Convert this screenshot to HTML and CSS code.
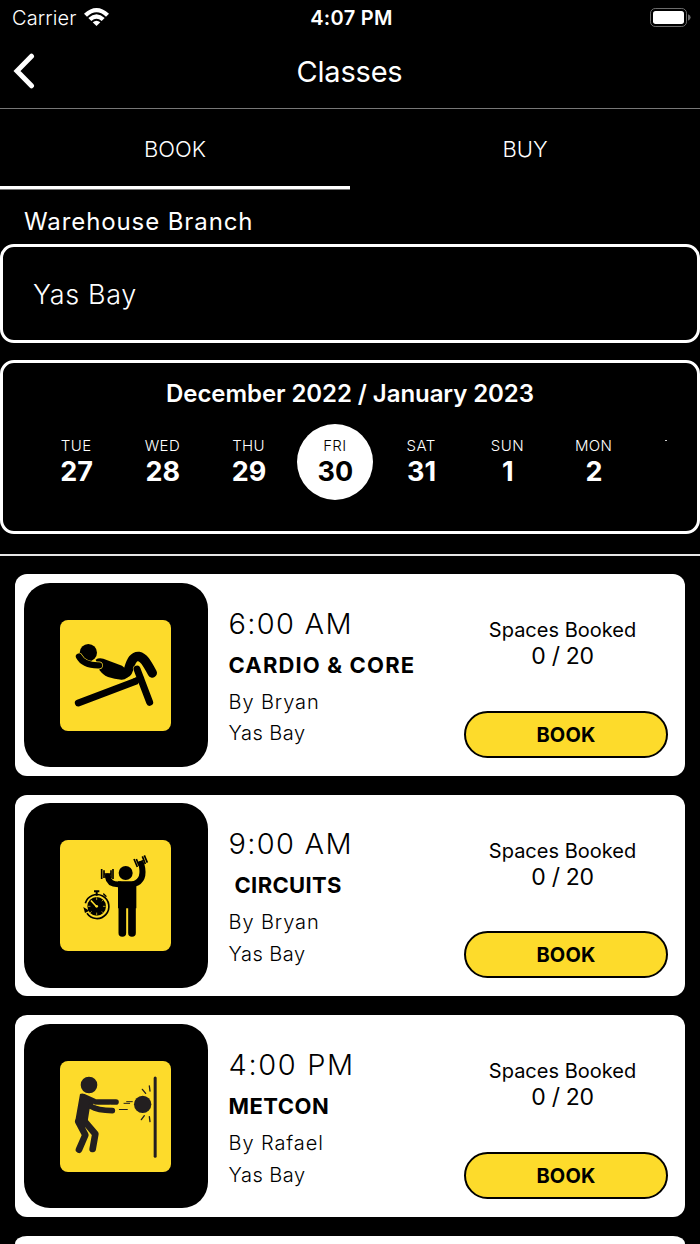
FILE: index.html
```html
<!DOCTYPE html>
<html lang="en">
<head>
    <meta charset="UTF-8">
    <meta name="viewport" content="width=device-width, initial-scale=1.0">
    <title>Classes</title>
    <link rel="stylesheet" href="styles.css">
</head>
<body>
    <div class="status-bar">
        <div class="carrier">
            <span>Carrier</span>
            <svg class="wifi" viewBox="0 0 75 54">
                <path d="M0 17 Q37.5 -17 75 17 L66 26 Q37.5 0 9 26 Z"/>
                <path d="M13 30 Q37.5 8 62 30 L53 39 Q37.5 25 22 39 Z"/>
                <path d="M26 43 Q37.5 33 49 43 L37.5 54 Z"/>
            </svg>
        </div>
        <span class="clock">4:07 PM</span>
        <div class="battery-wrap">
            <svg class="battery" viewBox="0 0 123 57">
                <rect x="1.5" y="1.5" width="108" height="54" rx="14" fill="none" stroke="#6c6c6c" stroke-width="3"/>
                <rect x="9" y="9" width="93" height="39" rx="8" fill="#fff"/>
                <path d="M114 19 Q122 22 122 28.5 Q122 35 114 38 Z" fill="#6c6c6c"/>
            </svg>
        </div>
    </div>

    <header class="header">
        <svg class="back" viewBox="0 0 22 36">
            <path d="M18.5 3.2 L4 18 L18.5 32.8"/>
        </svg>
        <h1>Classes</h1>
    </header>

    <nav class="tabs">
        <div class="tab active">BOOK</div>
        <div class="tab">BUY</div>
    </nav>

    <main>
        <h2 class="branch-label">Warehouse Branch</h2>
        <div class="branch-field">Yas Bay</div>

        <section class="calendar">
            <h3>December 2022 / January 2023</h3>
            <div class="days">
                <div class="day"><span>TUE</span><b>27</b></div>
                <div class="day"><span>WED</span><b>28</b></div>
                <div class="day"><span>THU</span><b>29</b></div>
                <div class="day selected"><span>FRI</span><b>30</b></div>
                <div class="day"><span>SAT</span><b>31</b></div>
                <div class="day"><span>SUN</span><b>1</b></div>
                <div class="day"><span>MON</span><b>2</b></div>
                <div class="day-peek"></div>
            </div>
        </section>

        <section class="class-list">
            <article class="card">
                <div class="thumb">
                    <svg class="icon" viewBox="30 29 333 333">
                        <circle cx="115" cy="127" r="26"/>
                        <path d="M222 190 Q232 190 236 176 C244 149 252 137 266 138 C281 141 290 157 307 188" class="limb" stroke-width="28"/>
                        <path d="M137 148 Q146 141 160 145 L216 166 L238 184 Q234 209 214 208 Q194 207 174 200 Q157 193 149 180 Z"/>
                        <path d="M87 139 Q101 166 147 165" class="outline" stroke-width="23"/>
                        <path d="M87 139 Q101 166 147 165" class="limb" stroke-width="19"/>
                        <path d="M85 278 L273 207" class="limb" stroke-width="21"/>
                        <path d="M261 176 L299 276" class="outline" stroke-width="24"/>
                        <path d="M261 176 L299 276" class="limb" stroke-width="21"/>
                        <path d="M255 212 L273 205" class="limb" stroke-width="18"/>
                    </svg>
                </div>
                <div class="info">
                    <p class="time">6:00 AM</p>
                    <h4 class="cardio">CARDIO &amp; CORE</h4>
                    <p class="detail">By Bryan</p>
                    <p class="detail place">Yas Bay</p>
                </div>
                <div class="booking">
                    <p class="spaces">Spaces Booked</p>
                    <p class="count">0 / 20</p>
                    <button>BOOK</button>
                </div>
            </article>

            <article class="card">
                <div class="thumb">
                    <svg class="icon" viewBox="30 30 333 333">
                        <circle cx="227" cy="129" r="21"/>
                        <path d="M204 154 H259 V235 H204 Z"/>
                        <path d="M217 225 V309 M246 225 V309" class="limb" stroke-width="23"/>
                        <path d="M211 163 Q177 166 173 139" class="limb" stroke-width="17"/>
                        <path d="M252 162 Q287 151 274 102" class="limb" stroke-width="18"/>
                        <path d="M155 117 V147 M162 121 V144 M183 121 V144 M189 117 V147 M161 132 H184" class="limb butt" stroke-width="5"/>
                        <path d="M252 87 L262 111 M259 87 L267 107 M277 79 L286 102 M283 76 L292 98 M263 98 L283 91" class="limb butt" stroke-width="5"/>
                        <path d="M106 220 A36 36 0 1 1 111 250" class="limb butt" stroke-width="5"/>
                        <circle cx="140" cy="229" r="28"/>
                        <path d="M132 181 H148 V187 H132 Z M137 186 H143 V197 H137 Z"/>
                        <path d="M161 192 L168 199" class="limb" stroke-width="4"/>
                        <path d="M100 231 L118 242 L105 249 Z"/>
                        <path d="M124 213 L138 228" class="mark" stroke-width="5"/>
                        <path d="M140 203 V209 M140 249 V255 M114 229 H120 M160 229 H166 M156 213 L160 209 M156 245 L159 248 M124 245 L121 248" class="mark" stroke-width="2"/>
                        <circle cx="140" cy="229" r="4" class="hub"/>
                    </svg>
                </div>
                <div class="info">
                    <p class="time">9:00 AM</p>
                    <h4 class="circuits">CIRCUITS</h4>
                    <p class="detail">By Bryan</p>
                    <p class="detail place">Yas Bay</p>
                </div>
                <div class="booking">
                    <p class="spaces">Spaces Booked</p>
                    <p class="count">0 / 20</p>
                    <button>BOOK</button>
                </div>
            </article>

            <article class="card">
                <div class="thumb">
                    <svg class="icon soft" viewBox="30 30 333 333">
                        <circle cx="117" cy="102" r="25"/>
                        <path d="M90 129 Q96 126 104 129 L137 144 L139 166 L119 173 L113 211 L75 214 Z"/>
                        <path d="M125 153 L198 153" class="limb" stroke-width="17"/>
                        <path d="M123 166 Q143 178 187 179" class="limb" stroke-width="17"/>
                        <path d="M130 160 Q150 168 182 163" class="mark" stroke-width="2"/>
                        <path d="M85 212 L106 252 L87 296 M102 209 L136 249 L128 294" class="limb" stroke-width="20"/>
                        <circle cx="278" cy="160" r="26"/>
                        <path d="M315.5 81 V316" class="limb" stroke-width="9"/>
                        <path d="M230 152 H247 M222 157 H239 M208 175.5 H232" class="limb" stroke-width="3"/>
                        <path d="M277 115 L287 127 M298 105 L300 120 M283 194 L274 206 M298 197 L300 212" class="limb" stroke-width="4"/>
                    </svg>
                </div>
                <div class="info">
                    <p class="time pm">4:00 PM</p>
                    <h4 class="metcon">METCON</h4>
                    <p class="detail">By Rafael</p>
                    <p class="detail place">Yas Bay</p>
                </div>
                <div class="booking">
                    <p class="spaces">Spaces Booked</p>
                    <p class="count">0 / 20</p>
                    <button>BOOK</button>
                </div>
            </article>

            <article class="card card-peek"></article>
        </section>
    </main>
</body>
</html>
```
FILE: styles.css
```css
* {
    margin: 0;
    padding: 0;
    box-sizing: border-box;
}

body {
    font-family: 'Inter', 'Liberation Sans', sans-serif;
    background: #000;
    color: #fff;
    width: 700px;
    height: 1244px;
    display: flex;
    flex-direction: column;
}

main {
    flex: 1;
    min-height: 0;
    display: flex;
    flex-direction: column;
}

.status-bar {
    display: grid;
    grid-template-columns: 1fr auto 1fr;
    align-items: center;
    height: 36px;
    padding: 0 9px 0 12px;
    font-size: 20px;
}

.carrier {
    display: flex;
    align-items: center;
    gap: 8px;
    font-weight: 300;
    letter-spacing: 0.1px;
}

.wifi {
    width: 25px;
    height: 18px;
    margin-bottom: 3px;
    fill: #fff;
}

.clock {
    font-weight: 600;
    letter-spacing: 0.3px;
}

.battery-wrap {
    display: flex;
    justify-content: flex-end;
    padding-bottom: 2px;
}

.battery {
    width: 41px;
    height: 19px;
}

.header {
    display: grid;
    grid-template-columns: 22px 1fr 22px;
    align-items: center;
    height: 73px;
    padding: 0 14px 2px 13px;
    border-bottom: 1px solid #777;
}

.back {
    width: 22px;
    height: 36px;
    fill: none;
    stroke: #fff;
    stroke-width: 5;
    stroke-linecap: round;
}

.header h1 {
    font-size: 29px;
    font-weight: 400;
    letter-spacing: -0.2px;
    text-align: center;
}

.tabs {
    display: flex;
    height: 80px;
    margin-bottom: 1px;
}

.tab {
    flex: 1;
    display: flex;
    align-items: center;
    justify-content: center;
    font-size: 22px;
    font-weight: 300;
    border-bottom: 3px solid transparent;
    padding-top: 3px;
}

.tab.active {
    border-bottom-color: #fff;
    box-shadow: 0 1px 0 #777;
}

.branch-label {
    height: 54px;
    padding: 17px 24px 0;
    font-size: 24px;
    line-height: 30px;
    font-weight: 400;
    letter-spacing: 0.9px;
}

.branch-field {
    height: 99px;
    border: 3px solid #fff;
    border-radius: 14px;
    display: flex;
    align-items: center;
    padding: 2px 30px 0;
    font-size: 27px;
    font-weight: 300;
    letter-spacing: 0.65px;
}

.calendar {
    height: 174px;
    margin-top: 17px;
    border: 3px solid #fff;
    border-radius: 14px;
    padding: 15px 30px 0;
}

.calendar h3 {
    font-size: 24px;
    line-height: 32px;
    font-weight: 600;
    letter-spacing: -0.07px;
    text-align: center;
}

.days {
    display: flex;
    margin-top: 14px;
}

.day {
    flex: 0 0 86.25px;
    height: 77px;
    display: flex;
    flex-direction: column;
    align-items: center;
    padding-top: 12px;
}

.day span {
    font-size: 15px;
    line-height: 19px;
    font-weight: 300;
    letter-spacing: 0.4px;
}

.day b {
    font-size: 27px;
    line-height: 34px;
    font-weight: 700;
    padding-left: 1px;
}

.day.selected {
    flex-basis: 76px;
    height: 76px;
    margin: 0 5.125px;
    border-radius: 50%;
    background: #fff;
    color: #000;
}

/* edge of the next day, the rest is scrolled out */
.day-peek {
    width: 3px;
    height: 1px;
    margin: 16px 0 0 28px;
    background: #ccc;
}

.class-list {
    flex: 1;
    min-height: 0;
    margin-top: 20px;
    border-top: 2px solid #e6e6e6;
    padding: 18px 15px 0;
    display: flex;
    flex-direction: column;
    gap: 19px;
}

.card {
    display: flex;
    flex: 0 0 201.6px;
    background: #fff;
    color: #000;
    border-radius: 12px;
    padding: 8.5px;
}

.card-peek {
    flex: 1 1 0;
    min-height: 0;
    padding: 0;
    border-radius: 12px 12px 0 0 / 8px 8px 0 0;
}

.thumb {
    width: 184.5px;
    height: 184.5px;
    border-radius: 26px;
    background: #000;
    display: flex;
    align-items: center;
    justify-content: center;
}

.icon {
    width: 111px;
    height: 111px;
    margin-top: 1px;
    border-radius: 8px;
    background: #fddb2b;
    fill: #000;
    stroke-linejoin: round;
}

.icon .limb {
    fill: none;
    stroke: #000;
    stroke-linecap: round;
}

.icon .butt {
    stroke-linecap: butt;
}

.icon .outline,
.icon .mark {
    fill: none;
    stroke: #fddb2b;
    stroke-linecap: round;
}

.icon .hub {
    fill: #fddb2b;
}

.icon.soft {
    fill: #231f20;
}

.icon.soft .limb {
    stroke: #231f20;
}

.info {
    width: 235px;
    padding: 21.4px 0 0 20.5px;
    white-space: nowrap;
}

.time {
    font-size: 29px;
    line-height: 40px;
    font-weight: 300;
    letter-spacing: 1.3px;
}

.time.pm {
    letter-spacing: 1.65px;
}

.info h4 {
    font-size: 22px;
    line-height: 32px;
    margin: 5px 0 6px;
    font-weight: 700;
}

.info .cardio {
    letter-spacing: 1.15px;
}

.info .circuits {
    padding-left: 6px;
    letter-spacing: 0.35px;
}

.info .metcon {
    letter-spacing: 0.5px;
}

.detail {
    font-size: 20px;
    line-height: 31.5px;
    font-weight: 300;
    letter-spacing: 0.9px;
}

.detail.place {
    letter-spacing: 0.5px;
}

.booking {
    width: 204px;
    margin-left: 21px;
    padding-top: 34.5px;
    text-align: center;
}

.spaces {
    font-size: 20px;
    line-height: 26px;
    padding-right: 7px;
}

.count {
    font-size: 23px;
    line-height: 27px;
    padding-right: 7px;
    letter-spacing: -0.3px;
}

.booking button {
    display: block;
    width: 204px;
    height: 47px;
    margin-top: 40.5px;
    padding-top: 1px;
    border: 2px solid #000;
    border-radius: 24px;
    background: #fddb2b;
    color: #000;
    font-family: inherit;
    font-size: 20px;
    font-weight: 700;
    letter-spacing: 0.2px;
}
```
